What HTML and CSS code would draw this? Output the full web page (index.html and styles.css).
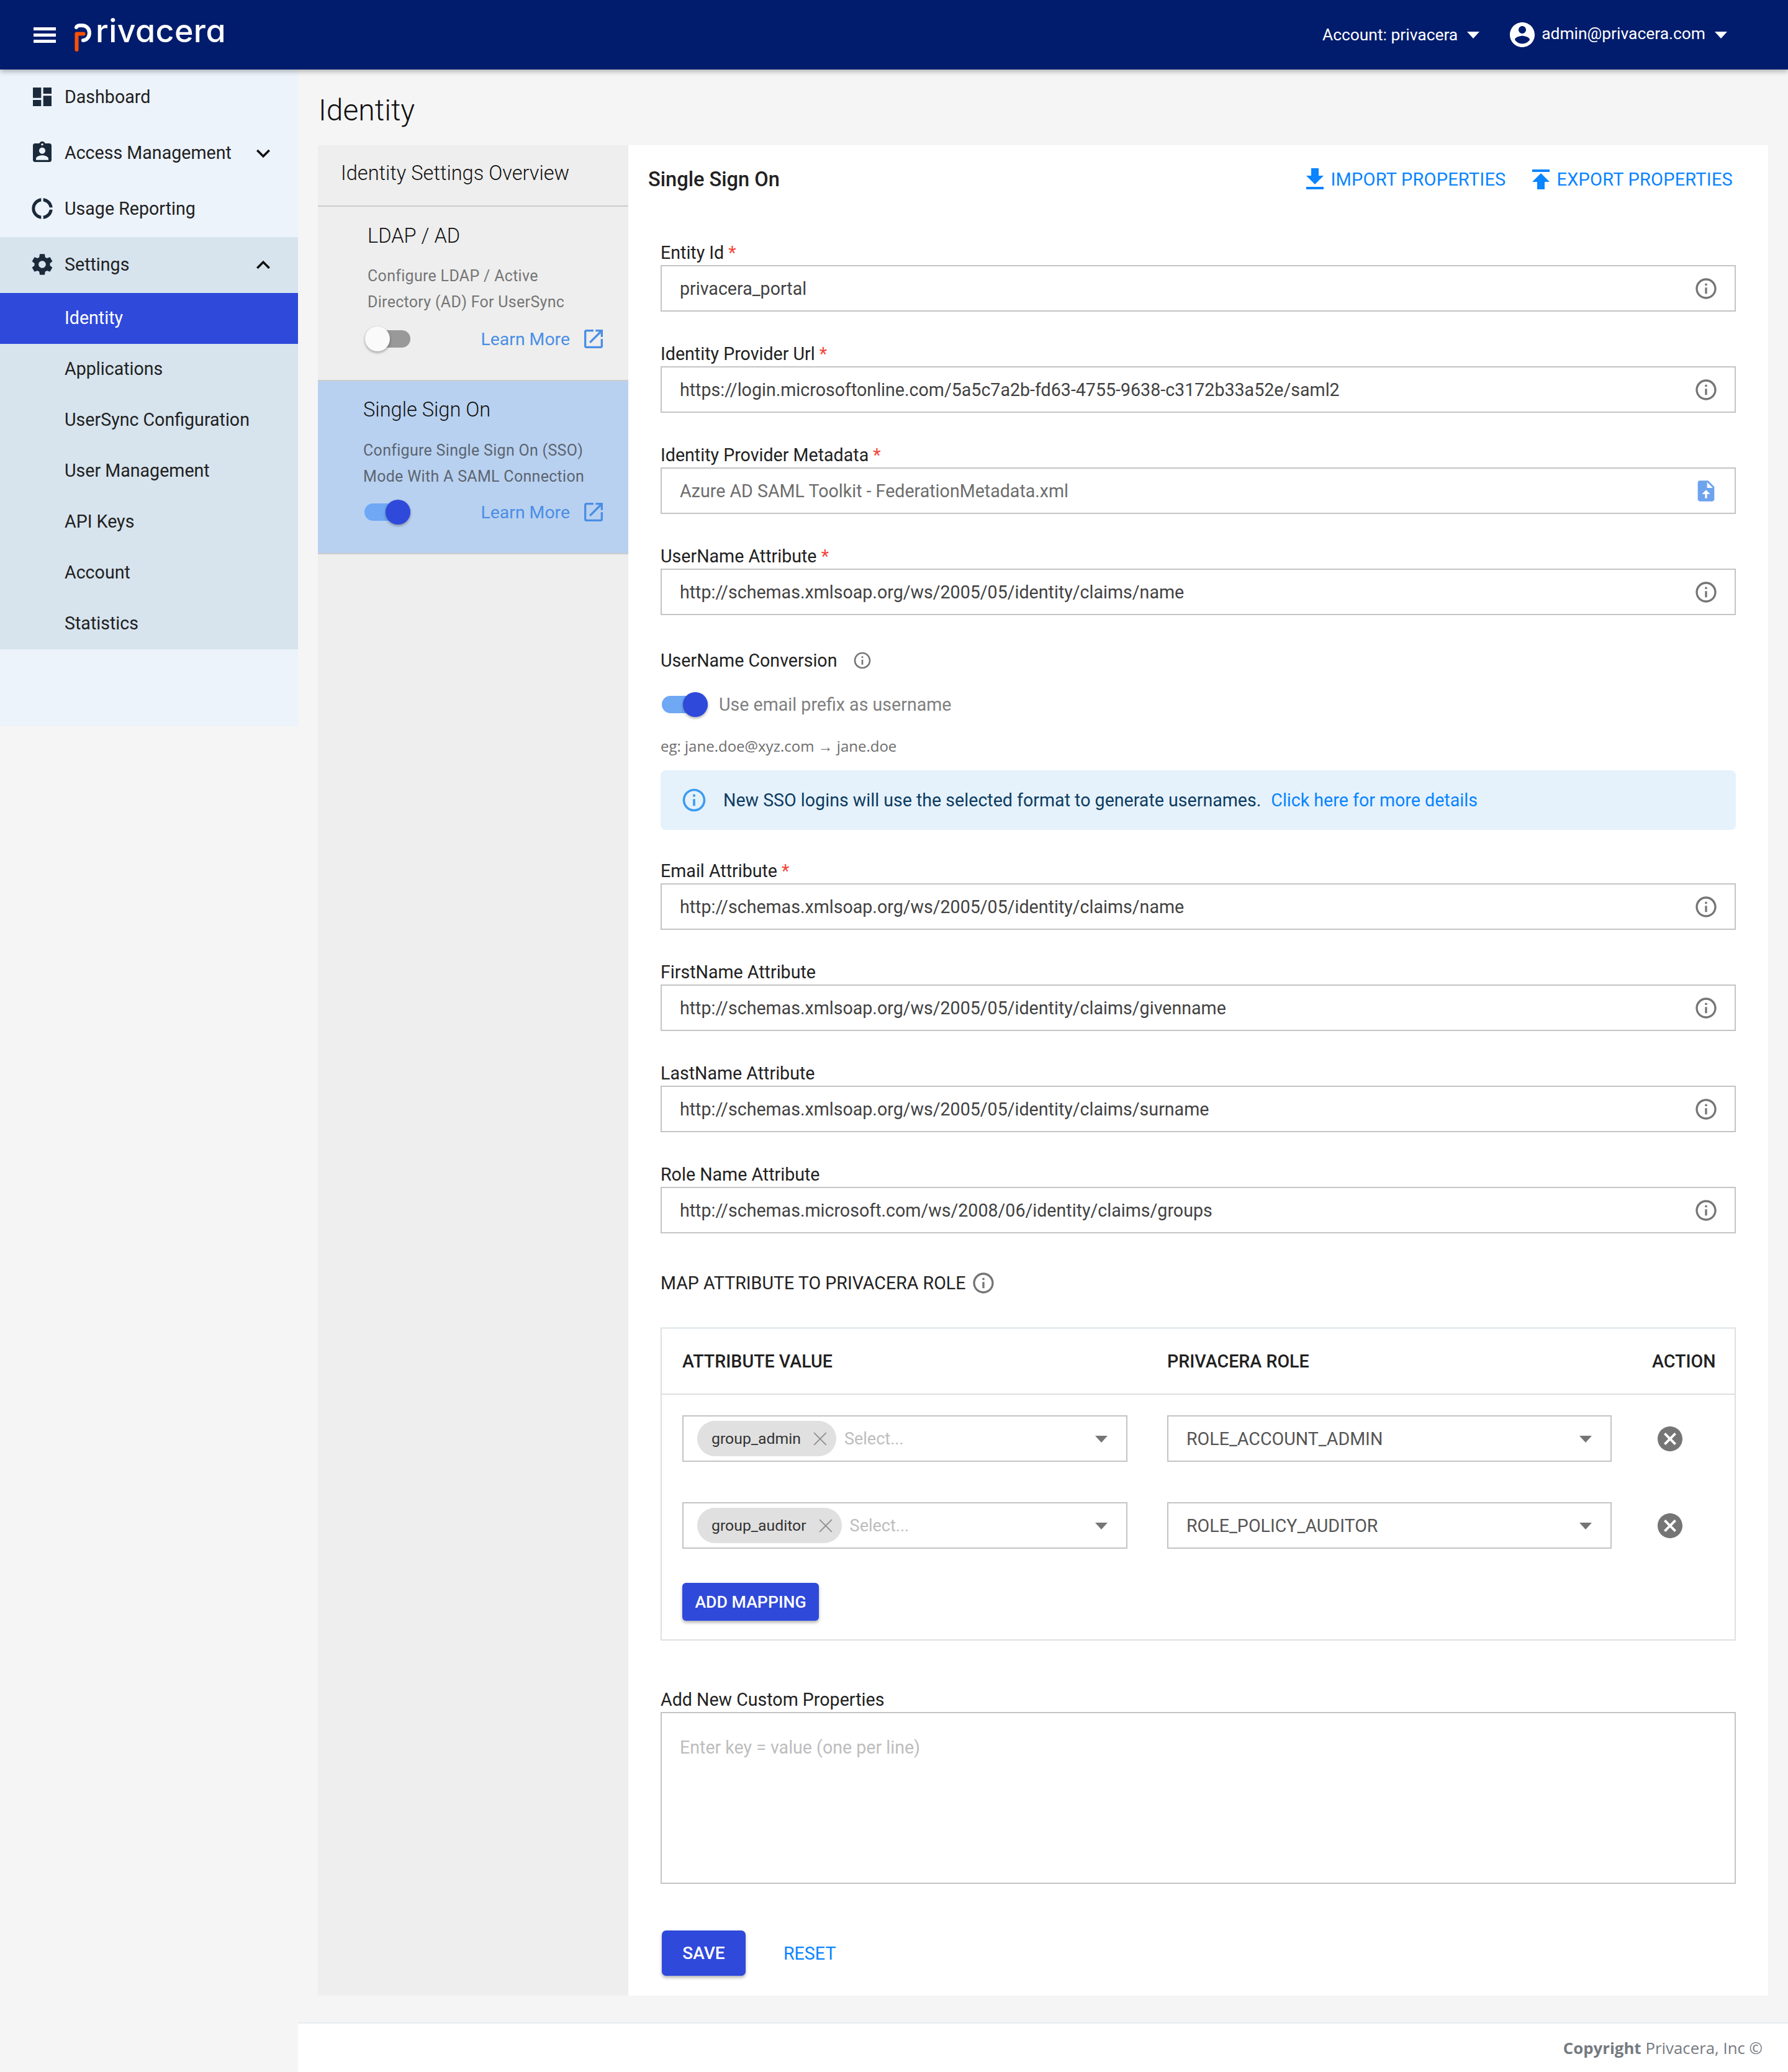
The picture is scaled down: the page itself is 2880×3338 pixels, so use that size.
FILE: index.html
```html
<!DOCTYPE html>
<html lang="en">
<head>
<meta charset="utf-8">
<title>Identity - Privacera</title>
<link rel="stylesheet" href="styles.css">
</head>
<body>
<svg class="defs" aria-hidden="true">
  <symbol id="i-info" viewBox="0 0 24 24"><path d="M11 7h2v2h-2zm0 4h2v6h-2zm1-9C6.48 2 2 6.48 2 12s4.48 10 10 10 10-4.48 10-10S17.52 2 12 2zm0 18c-4.41 0-8-3.59-8-8s3.59-8 8-8 8 3.59 8 8-3.59 8-8 8z"/></symbol>
  <symbol id="i-ext" viewBox="0 0 24 24"><path d="M19 19H5V5h7V3H5c-1.11 0-2 .9-2 2v14c0 1.1.89 2 2 2h14c1.1 0 2-.9 2-2v-7h-2v7zM14 3v2h3.59l-9.83 9.83 1.41 1.41L19 6.41V10h2V3h-7z"/></symbol>
  <symbol id="i-cancel" viewBox="0 0 24 24"><path d="M12 2C6.47 2 2 6.47 2 12s4.47 10 10 10 10-4.47 10-10S17.53 2 12 2zm5 13.59L15.59 17 12 13.41 8.41 17 7 15.59 10.59 12 7 8.41 8.41 7 12 10.59 15.59 7 17 8.41 13.41 12 17 15.59z"/></symbol>
</svg>

<header class="topbar">
  <div class="brand">
    <span class="burger"><i></i><i></i><i></i></span>
    <span class="logo">
      <svg class="logo-p" viewBox="0 0 30 52" aria-hidden="true">
        <path d="M3 12 C4 10 6 9 9 9 H12 C19 9 24 14 24 21 C24 28 19 33 14 33" fill="none" stroke="#fff" stroke-width="6" stroke-linecap="round"/>
        <path d="M3.5 48 V22.5 H14.5" fill="none" stroke="#ff5000" stroke-width="6" stroke-linecap="round" stroke-linejoin="round"/>
      </svg>
      <span class="logo-text">rivacera</span>
    </span>
  </div>
  <div class="top-actions">
    <span class="top-item account">Account: privacera<b class="caret caret-w"></b></span>
    <span class="top-item user">
      <svg class="user-icon" viewBox="0 0 24 24"><path d="M12 2C6.48 2 2 6.48 2 12s4.48 10 10 10 10-4.48 10-10S17.52 2 12 2zm0 3c1.66 0 3 1.34 3 3s-1.34 3-3 3-3-1.34-3-3 1.34-3 3-3zm0 14.2c-2.5 0-4.71-1.28-6-3.22.03-1.99 4-3.08 6-3.08 1.99 0 5.97 1.09 6 3.08-1.29 1.94-3.5 3.22-6 3.22z"/></svg>
      <span class="user-mail">admin@privacera.com</span><b class="caret caret-w"></b>
    </span>
  </div>
</header>

<div class="shell">
  <aside class="sidebar">
    <nav class="nav">
      <a class="nav-item">
        <svg class="nav-icon" viewBox="0 0 24 24"><path d="M3 13h8V3H3v10zm0 8h8v-6H3v6zm10 0h8V11h-8v10zm0-18v6h8V3h-8z"/></svg>
        <span>Dashboard</span>
      </a>
      <a class="nav-item">
        <svg class="nav-icon" viewBox="0 0 24 24"><path d="M19 3h-4.18C14.4 1.84 13.3 1 12 1c-1.3 0-2.4.84-2.82 2H5c-1.1 0-2 .9-2 2v14c0 1.1.9 2 2 2h14c1.1 0 2-.9 2-2V5c0-1.1-.9-2-2-2zm-7 0c.55 0 1 .45 1 1s-.45 1-1 1-1-.45-1-1 .45-1 1-1zm0 4c1.66 0 3 1.34 3 3s-1.34 3-3 3-3-1.34-3-3 1.34-3 3-3zm6 12H6v-1.4c0-2 4-3.1 6-3.1s6 1.1 6 3.1V19z"/></svg>
        <span>Access Management</span>
        <svg class="chev" viewBox="0 0 24 24"><path d="M7.41 8.59L12 13.17l4.59-4.58L18 10l-6 6-6-6 1.41-1.41z"/></svg>
      </a>
      <a class="nav-item">
        <svg class="nav-icon" viewBox="0 0 24 24"><path d="M11 5.08V2c-5 .5-9 4.81-9 10s4 9.5 9 10v-3.08c-3-.48-6-3.19-6-6.92s3-6.44 6-6.92zM18.97 11H22c-.47-5-4-8.53-9-9v3.08C16 5.51 18.54 8 18.97 11zM13 18.92V22c5-.47 8.53-4 9-9h-3.03c-.43 3-2.97 5.49-5.97 5.92z"/></svg>
        <span>Usage Reporting</span>
      </a>
      <div class="nav-group">
        <a class="nav-item">
          <svg class="nav-icon" viewBox="0 0 24 24"><path d="M19.43 12.98c.04-.32.07-.64.07-.98s-.03-.66-.07-.98l2.11-1.65c.19-.15.24-.42.12-.64l-2-3.46c-.12-.22-.39-.3-.61-.22l-2.49 1c-.52-.4-1.08-.73-1.69-.98l-.38-2.65C14.46 2.18 14.25 2 14 2h-4c-.25 0-.46.18-.49.42l-.38 2.65c-.61.25-1.17.59-1.69.98l-2.49-1c-.23-.09-.49 0-.61.22l-2 3.46c-.13.22-.07.49.12.64l2.11 1.65c-.04.32-.07.65-.07.98s.03.66.07.98l-2.11 1.65c-.19.15-.24.42-.12.64l2 3.46c.12.22.39.3.61.22l2.49-1c.52.4 1.08.73 1.69.98l.38 2.65c.03.24.24.42.49.42h4c.25 0 .46-.18.49-.42l.38-2.65c.61-.25 1.17-.59 1.69-.98l2.49 1c.23.09.49 0 .61-.22l2-3.46c.12-.22.07-.49-.12-.64l-2.11-1.65zM12 15.5c-1.93 0-3.5-1.57-3.5-3.5s1.57-3.5 3.5-3.5 3.5 1.57 3.5 3.5-1.57 3.5-3.5 3.5z"/></svg>
          <span>Settings</span>
          <svg class="chev" viewBox="0 0 24 24"><path d="M7.41 15.41L12 10.83l4.59 4.58L18 14l-6-6-6 6z"/></svg>
        </a>
        <a class="sub-item active">Identity</a>
        <a class="sub-item">Applications</a>
        <a class="sub-item">UserSync Configuration</a>
        <a class="sub-item">User Management</a>
        <a class="sub-item">API Keys</a>
        <a class="sub-item">Account</a>
        <a class="sub-item">Statistics</a>
      </div>
      <div class="nav-pad"></div>
    </nav>
  </aside>

  <div class="main-col">
    <main class="main">
      <h1 class="page-title">Identity</h1>
      <div class="panels">
        <section class="left-panel">
          <h2 class="overview">Identity Settings Overview</h2>
          <article class="card ldap">
            <h3>LDAP / AD</h3>
            <p>Configure LDAP / Active<br>Directory (AD) For UserSync</p>
            <div class="card-foot">
              <span class="switch off"><b></b></span>
              <a class="learn">Learn More<svg class="ext"><use href="#i-ext"/></svg></a>
            </div>
          </article>
          <article class="card sso">
            <h3>Single Sign On</h3>
            <p>Configure Single Sign On (SSO)<br>Mode With A SAML Connection</p>
            <div class="card-foot">
              <span class="switch on"><b></b></span>
              <a class="learn">Learn More<svg class="ext"><use href="#i-ext"/></svg></a>
            </div>
          </article>
        </section>

        <section class="right-panel">
          <div class="rp-head">
            <h2>Single Sign On</h2>
            <div class="rp-actions">
              <a class="rp-link"><svg viewBox="0 0 24 24"><path d="M19 9h-4V3H9v6H5l7 7 7-7zM5 18v2h14v-2H5z"/></svg>IMPORT PROPERTIES</a>
              <a class="rp-link"><svg viewBox="0 0 24 24"><path d="M5 4v2h14V4H5zm0 10h4v6h6v-6h4l-7-7-7 7z"/></svg>EXPORT PROPERTIES</a>
            </div>
          </div>

          <div class="form">
            <div class="field">
              <label>Entity Id <em>*</em></label>
              <div class="input"><span>privacera_portal</span><svg class="info"><use href="#i-info"/></svg></div>
            </div>
            <div class="field">
              <label>Identity Provider Url <em>*</em></label>
              <div class="input"><span>https://login.microsoftonline.com/5a5c7a2b-fd63-4755-9638-c3172b33a52e/saml2</span><svg class="info"><use href="#i-info"/></svg></div>
            </div>
            <div class="field">
              <label>Identity Provider Metadata <em>*</em></label>
              <div class="input"><span class="muted">Azure AD SAML Toolkit - FederationMetadata.xml</span>
                <svg class="file" viewBox="0 0 24 24"><path d="M14 2H6c-1.1 0-2 .9-2 2v16c0 1.1.9 2 2 2h12c1.1 0 2-.9 2-2V8l-6-6zm-1 7V3.5L18.5 9H13zm-1 2l4 4h-3v4h-2v-4H8l4-4z" fill-rule="evenodd"/></svg>
              </div>
            </div>
            <div class="field">
              <label>UserName Attribute <em>*</em></label>
              <div class="input"><span>http://schemas.xmlsoap.org/ws/2005/05/identity/claims/name</span><svg class="info"><use href="#i-info"/></svg></div>
            </div>

            <div class="conversion">
              <div class="conv-head">UserName Conversion<svg class="info small"><use href="#i-info"/></svg></div>
              <div class="conv-toggle"><span class="switch on"><b></b></span><span>Use email prefix as username</span></div>
              <div class="conv-eg">eg: jane.doe@xyz.com → jane.doe</div>
              <div class="banner">
                <svg class="banner-icon"><use href="#i-info"/></svg>
                <span>New SSO logins will use the selected format to generate usernames.</span>
                <a>Click here for more details</a>
              </div>
            </div>

            <div class="field">
              <label>Email Attribute <em>*</em></label>
              <div class="input"><span>http://schemas.xmlsoap.org/ws/2005/05/identity/claims/name</span><svg class="info"><use href="#i-info"/></svg></div>
            </div>
            <div class="field">
              <label>FirstName Attribute</label>
              <div class="input"><span>http://schemas.xmlsoap.org/ws/2005/05/identity/claims/givenname</span><svg class="info"><use href="#i-info"/></svg></div>
            </div>
            <div class="field">
              <label>LastName Attribute</label>
              <div class="input"><span>http://schemas.xmlsoap.org/ws/2005/05/identity/claims/surname</span><svg class="info"><use href="#i-info"/></svg></div>
            </div>
            <div class="field">
              <label>Role Name Attribute</label>
              <div class="input"><span>http://schemas.microsoft.com/ws/2008/06/identity/claims/groups</span><svg class="info"><use href="#i-info"/></svg></div>
            </div>

            <div class="map-title">MAP ATTRIBUTE TO PRIVACERA ROLE<svg class="info"><use href="#i-info"/></svg></div>

            <div class="map-table">
              <div class="map-head">
                <span>ATTRIBUTE VALUE</span>
                <span>PRIVACERA ROLE</span>
                <span class="action-h">ACTION</span>
              </div>
              <div class="map-body">
                <div class="map-row">
                  <div class="select multi">
                    <span class="chip">group_admin<svg viewBox="0 0 20 20"><path d="M3 3l14 14M17 3L3 17"/></svg></span>
                    <span class="ph">Select...</span>
                    <b class="caret caret-g"></b>
                  </div>
                  <div class="select"><span>ROLE_ACCOUNT_ADMIN</span><b class="caret caret-g"></b></div>
                  <svg class="del"><use href="#i-cancel"/></svg>
                </div>
                <div class="map-row">
                  <div class="select multi">
                    <span class="chip">group_auditor<svg viewBox="0 0 20 20"><path d="M3 3l14 14M17 3L3 17"/></svg></span>
                    <span class="ph">Select...</span>
                    <b class="caret caret-g"></b>
                  </div>
                  <div class="select"><span>ROLE_POLICY_AUDITOR</span><b class="caret caret-g"></b></div>
                  <svg class="del"><use href="#i-cancel"/></svg>
                </div>
                <button class="btn add">ADD MAPPING</button>
              </div>
            </div>

            <div class="field custom">
              <label>Add New Custom Properties</label>
              <div class="textarea">Enter key = value (one per line)</div>
            </div>

            <div class="form-actions">
              <button class="btn save">SAVE</button>
              <a class="reset">RESET</a>
            </div>
          </div>
        </section>
      </div>
    </main>
    <footer class="footer"><b>Copyright</b> Privacera, Inc ©</footer>
  </div>
</div>
</body>
</html>
```

FILE: styles.css
```css
* { box-sizing: border-box; }
html, body { margin: 0; padding: 0; }
body {
  width: 2880px;
  height: 3338px;
  background: #f5f5f5;
  font-family: Roboto, "Liberation Sans", sans-serif;
  font-size: 28.6px;
  color: #212121;
  overflow: hidden;
  display: flex;
  flex-direction: column;
}
.defs { display: none; }
h1, h2, h3, p { margin: 0; font-weight: 400; }

/* top bar */
.topbar {
  height: 112px;
  flex: none;
  background: #011c6d;
  color: #fff;
  display: flex;
  align-items: center;
  justify-content: space-between;
  box-shadow: 0 3px 8px rgba(0, 0, 0, .3);
  position: relative;
  z-index: 2;
}
.brand { display: flex; align-items: center; padding-left: 54px; }
.burger { width: 36px; display: flex; flex-direction: column; gap: 5px; margin-right: 30px; }
.burger i { display: block; height: 5px; background: #fff; }
.logo { display: flex; align-items: flex-start; height: 52px; margin-top: 4px; }
.logo-p { width: 30px; height: 52px; flex: none; }
.logo-text {
  font-family: Inter, Lato, sans-serif;
  font-feature-settings: "cv11";
  font-size: 52px;
  line-height: 52px;
  letter-spacing: .4px;
  font-weight: 500;
  margin-left: 4px;
  margin-top: -8px;
  color: #fff;
}
.top-actions { display: flex; align-items: center; padding-right: 98px; }
.top-item { display: flex; align-items: center; font-size: 26.4px; }
.account { margin-right: 45px; }
.user-icon { width: 48px; height: 48px; fill: #fff; margin-right: 7px; }
.user-mail { position: relative; top: -2px; }
.caret { display: inline-block; width: 0; height: 0; border-style: solid; border-width: 11px 10px 0 10px; border-color: transparent; }
.caret-w { border-top-color: #fff; margin-left: 15px; }
.caret-g { border-top-color: #757575; }

/* sidebar */
.shell { display: flex; flex: 1; min-height: 0; }
.sidebar { width: 480px; flex: none; }
.nav { background: #ecf3fb; height: 1058px; display: flex; flex-direction: column; }
.nav-item {
  height: 90px;
  display: flex;
  align-items: center;
  padding-left: 48px;
  padding-bottom: 2px;
  color: #212121;
  position: relative;
}
.nav-icon { width: 40px; height: 40px; fill: #1b2a3a; margin-right: 16px; flex: none; }
.chev { width: 44px; height: 44px; fill: #111; position: absolute; left: 402px; top: 23px; }
.nav-group { background: #d7e4ee; }
.sub-item { display: flex; align-items: center; height: 82px; padding-left: 104px; padding-bottom: 2px; color: #212121; }
.sub-item.active { background: #2f49db; color: #fff; }
.nav-pad { flex: 1; }

/* main */
.main-col { flex: 1; display: flex; flex-direction: column; min-width: 0; }
.main { flex: 1; padding: 0 32px 0 32px; display: flex; flex-direction: column; }
.page-title { height: 122px; display: flex; align-items: center; font-size: 48px; font-weight: 300; padding-top: 8px; color: #111; margin-left: 1px; }
.panels { display: flex; height: 2981px; }
.left-panel { width: 500px; flex: none; background: #eee; }
.overview { height: 99px; border-bottom: 2px solid #ccc; padding: 24px 0 0 37px; font-size: 32.6px; line-height: 42px; font-weight: 300; color: #111; }
.card { padding-left: 80px; padding-right: 36px; }
.card h3 { font-size: 32.6px; line-height: 42px; font-weight: 300; color: #111; }
.card p { font-size: 25px; line-height: 42px; color: #757575; letter-spacing: .3px; }
.ldap { height: 279px; padding-top: 26px; }
.ldap p { margin-top: 23px; }
.sso { height: 281px; background: #b9d1f0; border-top: 2px solid #ccc; border-bottom: 2px solid #ccc; padding-left: 73px; padding-top: 25px; }
.sso p { margin-top: 24px; color: #5b6470; }
.card-foot { display: flex; justify-content: space-between; align-items: center; margin-top: 16px; height: 44px; }
.sso .card-foot { margin-top: 14px; }
.learn { display: flex; align-items: center; color: #4a8ee6; font-size: 28.4px; }
.ext { width: 40px; height: 40px; fill: #4a8ee6; margin-left: 18px; }

.switch { display: inline-block; position: relative; height: 28px; border-radius: 14px; flex: none; }
.switch b { position: absolute; top: -6px; width: 40px; height: 40px; border-radius: 50%; box-shadow: 0 2px 4px rgba(0, 0, 0, .35); }
.switch.off { background: #999; width: 71px; margin-left: -2px; }
.switch.off b { left: -2px; background: #fafafa; }
.switch.on { background: #6fa8f4; width: 74px; margin-left: 2px; }
.switch.on b { left: 34px; background: #2f49db; }

.right-panel { flex: 1; background: #fff; padding-left: 32px; min-width: 0; }
.rp-head { display: flex; justify-content: space-between; align-items: center; height: 109px; padding-top: 1px; padding-right: 57px; }
.rp-head h2 { font-size: 32.6px; font-weight: 500; color: #212121; }
.rp-actions { display: flex; gap: 43px; }
.rp-link { display: flex; align-items: center; color: #0a84ff; font-size: 29px; letter-spacing: .2px; }
.rp-link svg { width: 48px; height: 48px; fill: #0a84ff; margin-left: -10px; margin-right: 1px; }

.form { padding-left: 20px; padding-right: 52px; }
.field { margin-bottom: 48px; }
.field label { display: block; height: 40px; line-height: 40px; color: #212121; }
.field label em { color: #f44336; font-style: normal; }
.form > .field:first-child { margin-top: 44px; }
.input {
  height: 75px;
  border: 2px solid #c4c4c4;
  display: flex;
  align-items: center;
  justify-content: space-between;
  padding: 0 28px 0 29px;
  color: #424242;
}
.muted { color: #6d6d6d; }
.info { width: 40px; height: 40px; fill: #757575; flex: none; position: relative; left: 2px; }
.file { width: 40px; height: 40px; fill: #6ea3ee; flex: none; position: relative; left: 2px; }

.conversion { margin-top: 53px; margin-bottom: 46px; }
.conv-head { display: flex; align-items: center; height: 40px; line-height: 40px; color: #212121; }
.conv-head .small { width: 32px; height: 32px; margin-left: 25px; left: 0; }
.conv-toggle { display: flex; align-items: center; margin-top: 31px; height: 40px; color: #808080; }
.conv-toggle .switch { margin-right: 18px; }
.conv-eg { font-family: "Open Sans", sans-serif; font-size: 24px; color: #6d6d6d; margin-top: 27px; line-height: 40px; }
.banner { height: 96px; margin-top: 19px; background: #e5f2fc; border-radius: 8px; display: flex; align-items: center; padding-left: 32px; color: #0d3c61; }
.banner-icon { width: 44px; height: 44px; fill: #3d9cf0; margin-right: 25px; flex: none; }
.banner a { color: #0a84ff; margin-left: 16px; }

.map-title { display: flex; align-items: center; height: 40px; color: #212121; margin-top: 60px; }
.map-title .info { margin-left: 8px; left: 0; }
.map-table { border: 2px solid #dfdfdf; border-top: 3px solid #e6ebef; margin-top: 51px; height: 505px; }
.map-head { height: 106px; border-bottom: 2px solid #dfdfdf; display: grid; grid-template-columns: 781px 781px 1fr; align-items: center; padding: 0 33px; font-weight: 500; color: #212121; }
.action-h { justify-self: end; }
.map-body { padding: 33px 33px 0 33px; }
.map-row { display: grid; grid-template-columns: 717px 716px 40px; column-gap: 64px; align-items: center; height: 75px; margin-bottom: 65px; }
.select { height: 75px; border: 2px solid #c4c4c4; display: flex; align-items: center; padding: 0 29px; position: relative; color: #555; }
.select .caret { position: absolute; right: 30px; top: 31px; }
.select.multi { padding-left: 22px; }
.chip { height: 57px; border-radius: 29px; background: #e0e0e0; display: inline-flex; align-items: center; padding: 0 12px 0 23px; font-size: 24.8px; color: #333; }
.chip svg { width: 28px; height: 28px; margin-left: 17px; fill: none; stroke: #8e8e8e; stroke-width: 1.3; }
.ph { color: #bdbdbd; margin-left: 13px; font-size: 27px; }
.del { width: 48px; height: 48px; fill: #757575; margin-left: 6px; }
.btn { border: 0; background: #2f49db; color: #fff; font-family: inherit; font-weight: 500; border-radius: 6px; box-shadow: 0 3px 5px rgba(0, 0, 0, .3); padding: 0; }
.add { width: 220px; height: 61px; font-size: 26.7px; margin-top: -10px; display: block; }

.field.custom { margin-top: 75px; margin-bottom: 0; }
.textarea { height: 277px; border: 2px solid #c4c4c4; padding: 37px 28px 0 29px; color: #bdbdbd; line-height: 36px; }

.form-actions { display: flex; align-items: center; margin-top: 75px; padding-left: 2px; }
.save { width: 135px; height: 73px; font-size: 28px; border-radius: 7px; }
.reset { color: #0a84ff; margin-left: 61px; }

.footer { height: 80px; flex: none; background: #fff; border-top: 2px solid #e8ecf0; display: flex; align-items: center; justify-content: flex-end; gap: 7px; padding-right: 41px; font-family: "Open Sans", sans-serif; font-size: 25.8px; color: #757a80; }
.footer b { font-weight: 700; }
```
